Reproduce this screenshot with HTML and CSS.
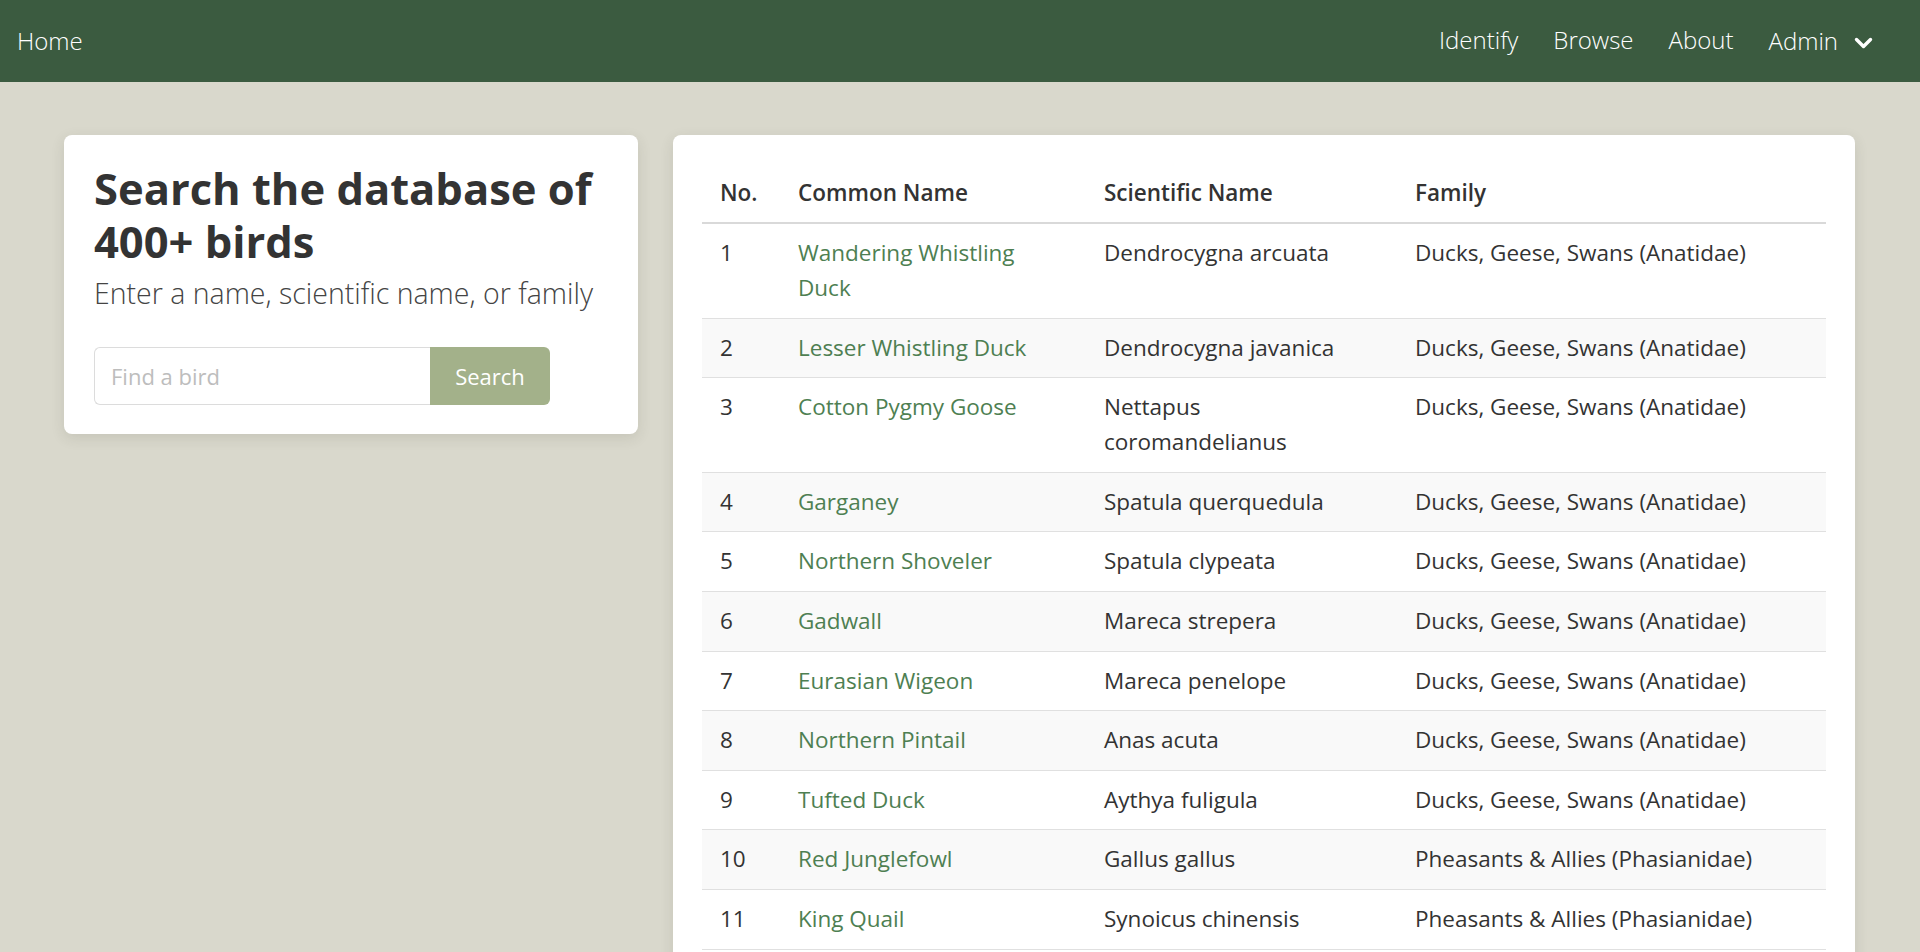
FILE: index.html
```html
<!DOCTYPE html>
<html lang="en">
<head>
<meta charset="utf-8">
<title>Birds</title>
<link rel="stylesheet" href="styles.css">
</head>
<body>
<nav class="navbar">
  <a class="nav-brand" href="#">Home</a>
  <ul class="nav-links">
    <li><a href="#">Identify</a></li>
    <li><a href="#">Browse</a></li>
    <li><a href="#">About</a></li>
    <li class="dropdown"><a href="#">Admin</a>
      <svg class="chevron" viewBox="0 0 19 12" width="19" height="12" aria-hidden="true"><polyline points="2.5,2.5 9.5,9.5 16.5,2.5" fill="none" stroke="#ffffff" stroke-width="3.4" stroke-linecap="round" stroke-linejoin="round"/></svg>
    </li>
  </ul>
</nav>

<main class="main">
  <section class="card search-card">
    <h1 class="search-title">Search the database of 400+ birds</h1>
    <p class="search-sub">Enter a name, scientific name, or family</p>
    <form class="search-form">
      <input class="search-input" type="text" placeholder="Find a bird">
      <button class="search-btn" type="button">Search</button>
    </form>
  </section>

  <section class="card table-card">
    <table class="bird-table">
      <colgroup>
        <col class="c-no"><col class="c-common"><col class="c-sci"><col>
      </colgroup>
      <thead>
        <tr><th>No.</th><th>Common Name</th><th>Scientific Name</th><th>Family</th></tr>
      </thead>
      <tbody>
        <tr><td>1</td><td class="common"><a href="#">Wandering Whistling Duck</a></td><td class="sci">Dendrocygna arcuata</td><td>Ducks, Geese, Swans (Anatidae)</td></tr>
        <tr><td>2</td><td class="common"><a href="#">Lesser Whistling Duck</a></td><td class="sci">Dendrocygna javanica</td><td>Ducks, Geese, Swans (Anatidae)</td></tr>
        <tr><td>3</td><td class="common"><a href="#">Cotton Pygmy Goose</a></td><td class="sci">Nettapus coromandelianus</td><td>Ducks, Geese, Swans (Anatidae)</td></tr>
        <tr><td>4</td><td class="common"><a href="#">Garganey</a></td><td class="sci">Spatula querquedula</td><td>Ducks, Geese, Swans (Anatidae)</td></tr>
        <tr><td>5</td><td class="common"><a href="#">Northern Shoveler</a></td><td class="sci">Spatula clypeata</td><td>Ducks, Geese, Swans (Anatidae)</td></tr>
        <tr><td>6</td><td class="common"><a href="#">Gadwall</a></td><td class="sci">Mareca strepera</td><td>Ducks, Geese, Swans (Anatidae)</td></tr>
        <tr><td>7</td><td class="common"><a href="#">Eurasian Wigeon</a></td><td class="sci">Mareca penelope</td><td>Ducks, Geese, Swans (Anatidae)</td></tr>
        <tr><td>8</td><td class="common"><a href="#">Northern Pintail</a></td><td class="sci">Anas acuta</td><td>Ducks, Geese, Swans (Anatidae)</td></tr>
        <tr><td>9</td><td class="common"><a href="#">Tufted Duck</a></td><td class="sci">Aythya fuligula</td><td>Ducks, Geese, Swans (Anatidae)</td></tr>
        <tr><td>10</td><td class="common"><a href="#">Red Junglefowl</a></td><td class="sci">Gallus gallus</td><td>Pheasants &amp; Allies (Phasianidae)</td></tr>
        <tr><td>11</td><td class="common"><a href="#">King Quail</a></td><td class="sci">Synoicus chinensis</td><td>Pheasants &amp; Allies (Phasianidae)</td></tr>
      </tbody>
    </table>
  </section>
</main>
</body>
</html>
```
FILE: styles.css
```css
html, body {
  margin: 0;
  padding: 0;
  background: #d9d8cc;
}
body {
  font-family: "Open Sans", "Noto Sans", sans-serif;
  color: #333333;
}
a { text-decoration: none; }

/* ---------- navbar ---------- */
.navbar {
  height: 82px;
  background: #3b5b40;
  display: flex;
  align-items: center;
  justify-content: space-between;
  padding: 0 47px 0 17px;
}
.nav-brand {
  color: #ffffff;
  font-size: 24px;
  font-weight: 300;
  line-height: 1;
}
.nav-links {
  list-style: none;
  margin: 0;
  padding: 0;
  display: flex;
  align-items: center;
  gap: 35px;
}
.nav-links a {
  color: #ffffff;
  font-size: 24px;
  font-weight: 300;
  line-height: 1;
}
.dropdown {
  display: flex;
  align-items: center;
  gap: 16px;
}
.chevron {
  display: block;
  margin-top: 3px;
}

/* ---------- layout ---------- */
.main {
  display: flex;
  align-items: flex-start;
  gap: 35px;
  padding: 53px 65px 0 64px;
}
.card {
  background: #ffffff;
  border-radius: 8px;
  box-shadow: 0 4px 14px rgba(60, 60, 40, 0.12);
}

/* ---------- search card ---------- */
.search-card {
  width: 574px;
  flex: none;
  box-sizing: border-box;
  padding: 27px 30px 29px 30px;
}
.search-title {
  margin: 0;
  font-size: 43.5px;
  line-height: 53px;
  font-weight: 700;
  color: #333333;
}
.search-sub {
  margin: 7px 0 0 0;
  font-size: 28.5px;
  line-height: 36px;
  font-weight: 300;
  color: #444444;
}
.search-form {
  display: flex;
  margin-top: 36px;
}
.search-input {
  width: 336px;
  height: 58px;
  box-sizing: border-box;
  border: 1px solid #dcdcdc;
  border-right: none;
  border-radius: 6px 0 0 6px;
  padding: 0 16px;
  font-family: "Open Sans", "Noto Sans", sans-serif;
  font-size: 22px;
  font-weight: 400;
  color: #333333;
  outline: none;
}
.search-input::placeholder { color: #bdbdbd; }
.search-btn {
  width: 120px;
  height: 58px;
  border: none;
  border-radius: 0 6px 6px 0;
  background: #a3b18a;
  color: #ffffff;
  font-family: "Open Sans", "Noto Sans", sans-serif;
  font-size: 22px;
  font-weight: 400;
  padding: 0;
}

/* ---------- table card ---------- */
.table-card {
  flex: 1;
  padding: 29px 29px 24px 29px;
}
.bird-table {
  width: 100%;
  border-collapse: collapse;
  table-layout: fixed;
  font-size: 22.5px;
  line-height: 35px;
}
.c-no { width: 78px; }
.c-common { width: 306px; }
.c-sci { width: 311px; }
.bird-table th {
  text-align: left;
  font-weight: 600;
  color: #333333;
  padding: 11px 18px 12px 18px;
  border-bottom: 2px solid #d9d9d9;
}
.bird-table td {
  vertical-align: top;
  padding: 11px 18px 12.6px 18px;
  font-weight: 400;
  color: #333333;
}
.bird-table td.common,
.bird-table td.sci { padding-right: 34px; }
.bird-table tbody tr { border-bottom: 1px solid #e0e0e0; }
.bird-table tbody tr:nth-child(even) { background: #f9f9f9; }
.bird-table td a { color: #4e7f52; }
```
